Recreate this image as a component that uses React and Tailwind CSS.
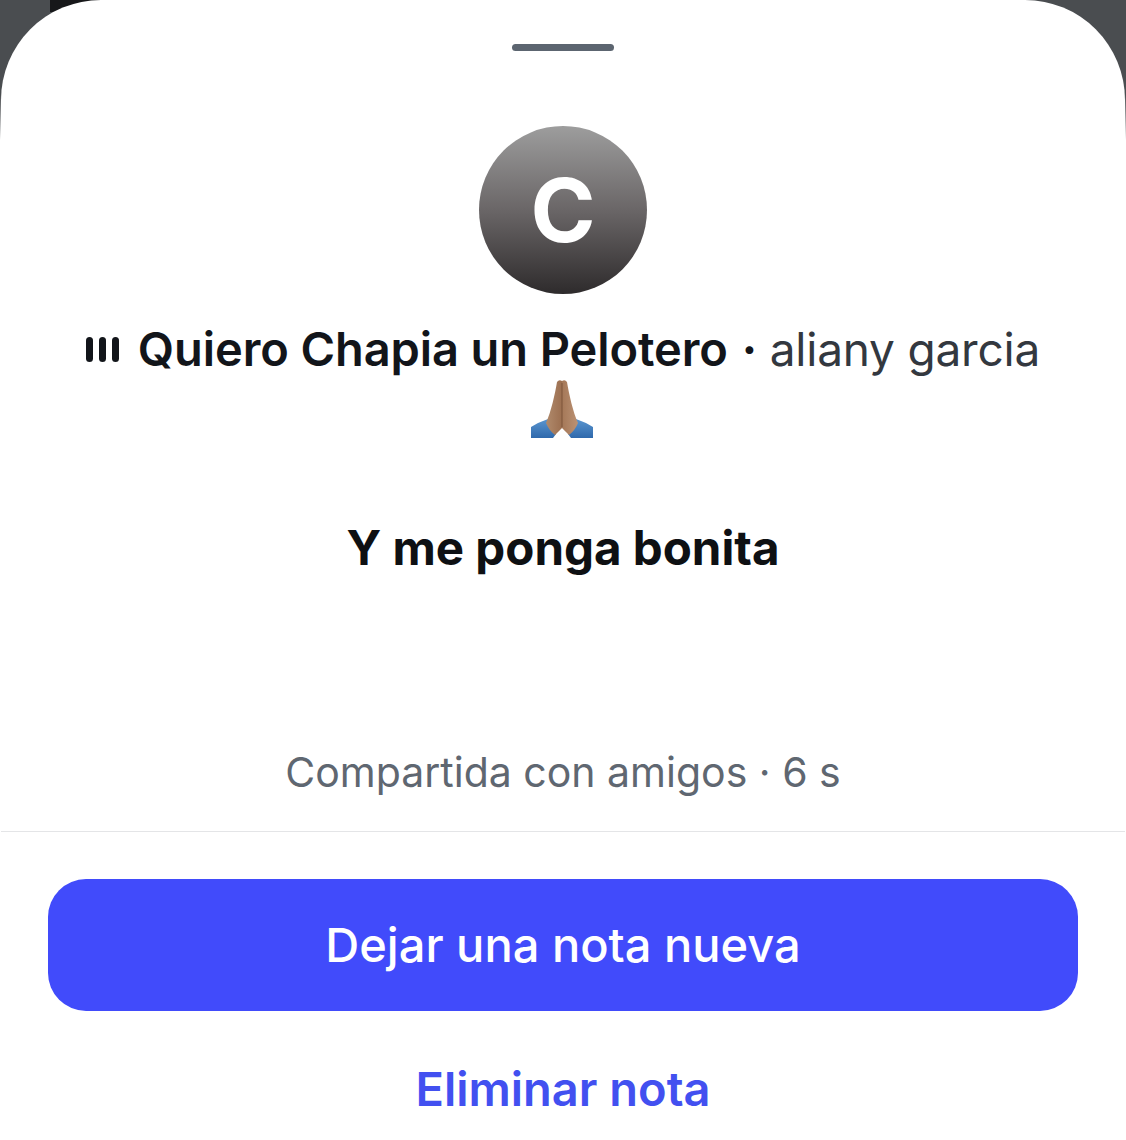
const PrayingHands = () => (
	<svg width="62" height="60" viewBox="0 0 62 60" className="block -translate-x-px">
		<defs>
			<linearGradient id="skinLeft" x1="0" y1="0" x2="1" y2="0">
				<stop offset="0" stopColor="#b08a6c" />
				<stop offset="1" stopColor="#9c6f50" />
			</linearGradient>
			<linearGradient id="skinRight" x1="0" y1="0" x2="1" y2="0">
				<stop offset="0" stopColor="#a57858" />
				<stop offset="1" stopColor="#bb9274" />
			</linearGradient>
			<linearGradient id="sleeve" x1="0" y1="0" x2="0" y2="1">
				<stop offset="0" stopColor="#5a95cf" />
				<stop offset="1" stopColor="#2f69ac" />
			</linearGradient>
		</defs>
		{/* sleeves */}
		<path d="M0 49 Q8 44 17 41 C19 48 22 52 25 56 L22 60 L0 60 Z" fill="url(#sleeve)" />
		<path d="M62 49 Q54 44 45 41 C43 48 40 52 37 56 L40 60 L62 60 Z" fill="url(#sleeve)" />
		{/* hands */}
		<path d="M26 4 Q28 1 31 3 L31 50 L24 57 C20 54 17 50 15 45 C20 34 24 16 26 4 Z" fill="url(#skinLeft)" />
		<path d="M36 4 Q34 1 31 3 L31 50 L38 57 C42 54 45 50 47 45 C42 34 38 16 36 4 Z" fill="url(#skinRight)" />
		<path d="M31 5 L31 49" stroke="#7d543b" strokeWidth="1" />
	</svg>
);

export default function App() {
	return (
		<div className="relative h-[1140px] w-full overflow-hidden bg-[linear-gradient(to_bottom,#4a4d50_0px,#4a4d50_95px,#ffffff_140px)] font-['Inter',sans-serif]">
			{/* dark sliver of the page behind the sheet */}
			<div className="absolute left-[50px] top-0 h-[12px] w-[60px] bg-[#17181a]" />

			<div className="relative mx-px flex h-full flex-col items-center rounded-t-[100px] bg-white">
				<div className="mt-[44px] h-[7px] w-[102px] rounded-full bg-[#5c6570]" />

				<div className="mt-[75px] flex h-[168px] w-[168px] items-center justify-center rounded-full bg-[linear-gradient(to_bottom,#9d9d9d,#6a6667_50%,#2e2b2c)] text-[88px] font-bold leading-none text-white">
					C
				</div>

				<div className="mt-[28px] flex h-[54px] items-center leading-[54px] tracking-[-0.1px] text-[#12151a]">
					<span className="mr-[19px] flex gap-[6px]">
						<span className="h-[25px] w-[7px] rounded-full bg-[#12151a]" />
						<span className="h-[25px] w-[7px] rounded-full bg-[#12151a]" />
						<span className="h-[25px] w-[7px] rounded-full bg-[#12151a]" />
					</span>
					<span className="text-[47px] font-semibold">Quiero Chapia un Pelotero</span>
					<span className="ml-[14px] text-[46px] tracking-[-0.2px] text-[#33383f]">
						<span className="font-bold text-[#12151a]">·</span> aliany garcia
					</span>
				</div>
				<div className="mt-[2px]">
					<PrayingHands />
				</div>

				<div className="mt-[80px] text-[47.5px] font-bold leading-[60px] text-[#0e1013]">
					Y me ponga bonita
				</div>

				<div className="mt-[167px] text-[41px] leading-[54px] text-[#5f6771]">
					Compartida con amigos · 6 s
				</div>

				<div className="mt-[32px] h-px w-full bg-[#e4e5e7]" />

				<button className="mt-[47px] flex h-[132px] w-[1030px] shrink-0 items-center justify-center rounded-[38px] bg-[#414bfb] text-[47px] font-medium text-white">
					Dejar una nota nueva
				</button>

				<button className="mt-[48px] text-[47px] font-semibold leading-[60px] text-[#4250f0]">
					Eliminar nota
				</button>
			</div>
		</div>
	);
}
